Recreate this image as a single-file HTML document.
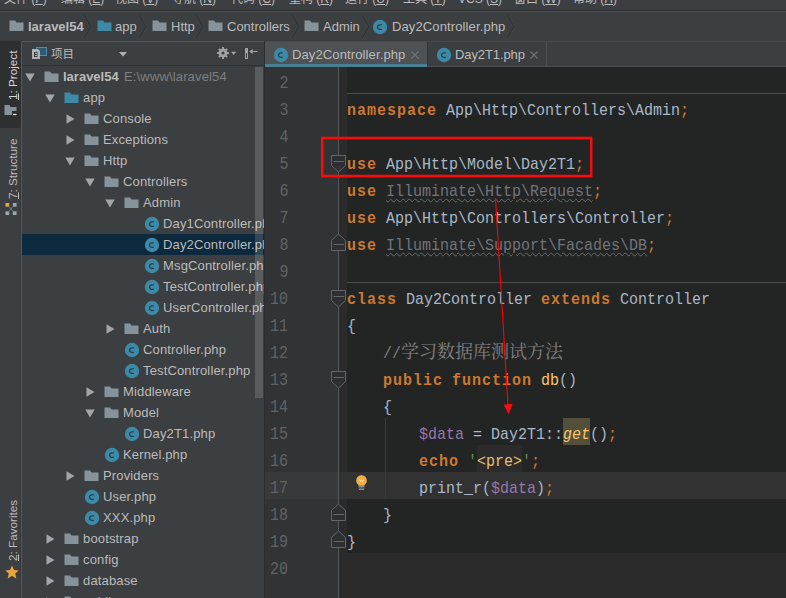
<!DOCTYPE html>
<html lang="zh-CN"><head><meta charset="utf-8"><title>laravel54 - Day2Controller.php</title>
<style>
html,body{margin:0;padding:0}
body{width:786px;height:598px;overflow:hidden;position:relative;background:#3C3F41;
 font-family:"Liberation Sans","Noto Sans CJK SC",sans-serif;font-size:13px;color:#BBBBBB}
div,span,svg{box-sizing:border-box}
.abs,.ic,.t{position:absolute}
.ic{display:block;overflow:visible}
.t{white-space:pre;line-height:16px;height:16px}
.b{font-weight:bold}
#menu{position:absolute;left:0;top:0;width:786px;height:10px;overflow:hidden;background:#3C3F41}
#menu span{position:absolute;top:-8px;font-size:12px;line-height:14px;white-space:pre;color:#BBBBBB}
#menu u{text-decoration:underline;text-underline-offset:1px}
#nav{position:absolute;left:0;top:12px;width:786px;height:29px}
#stripe{position:absolute;left:0;top:42px;width:21px;height:556px;background:#3C3F41}
.vt{position:absolute;left:1.5px;width:21px;white-space:pre;font-size:11.7px;line-height:21px;
 transform-origin:0 0;transform:rotate(-90deg);text-align:left}
#proj{position:absolute;left:22px;top:42px;width:242px;height:556px;overflow:hidden;background:#3C3F41}
#tree{position:absolute;left:0;top:24px;width:242px;height:532px;overflow:hidden}
.row{position:absolute;left:0;width:242px;height:21px}
.row .t{top:3px;letter-spacing:.15px}
.g{color:#7D7F80}
#ed{position:absolute;left:265px;top:42px;width:521px;height:556px;overflow:hidden;background:#2B2B2B}
#tabs{position:absolute;left:0;top:0;width:521px;height:25px;background:#3C3F41}
#gut{position:absolute;left:0;top:25px;width:73px;height:531px;background:#313335}
.ln{position:absolute;left:0;width:23.5px;text-align:right;height:27px;line-height:27px;font-family:"Liberation Mono",monospace;
 font-size:17.5px;color:#606366;white-space:pre}
.ln i{font-style:normal;display:inline-block;transform:scaleX(.857);transform-origin:100% 50%}
#code{position:absolute;left:82px;top:25px;width:439px;height:486px;background:#232525}
.cl{position:absolute;left:0;height:27px;line-height:27px;white-space:pre;font-family:"Liberation Mono","Noto Serif CJK SC",monospace;
 font-size:17px;color:#A9B7C6;transform:scaleX(.88235);transform-origin:0 0;padding-top:3px}
.k{color:#CC7832;font-weight:bold;letter-spacing:1.1333px}
.o{color:#CC7832}
.v{color:#9876AA}
.f{color:#FFC66D}
.c{color:#808080}
.cj{position:absolute;height:27px;line-height:27px;padding-top:3px;white-space:pre;font-family:"Liberation Mono","Noto Serif CJK SC",serif;font-size:18px;color:#808080}
.u{color:#72737A;text-decoration:underline wavy #6A6A6A;text-decoration-thickness:1px;text-underline-offset:1.5px}
.s{color:#6A8759}
.h{color:#E8BF6A}
</style></head><body>

<div id="menu">
<span style="left:4px">文件 (<u>F</u>)</span>
<span style="left:61px">编辑 (<u>E</u>)</span>
<span style="left:115px">视图 (<u>V</u>)</span>
<span style="left:172px">导航 (<u>N</u>)</span>
<span style="left:231px">代码 (<u>C</u>)</span>
<span style="left:289px">重构 (<u>R</u>)</span>
<span style="left:345px">运行 (<u>U</u>)</span>
<span style="left:403px">工具 (<u>T</u>)</span>
<span style="left:458px">VCS (<u>S</u>)</span>
<span style="left:514px">窗口 (<u>W</u>)</span>
<span style="left:573px">帮助 (<u>H</u>)</span>
</div>
<div class="abs" style="left:0;top:10px;width:786px;height:1px;background:#2A2C2D"></div>
<div class="abs" style="left:0;top:11px;width:786px;height:1px;background:#505254"></div>
<div id="nav">
<svg class="ic" style="left:9px;top:8px" width="15" height="12" viewBox="0 0 15 12"><path d="M0.5 0.5H6L7.5 2.5H14.5V11H0.5Z" fill="#87939A"/></svg>
<span class="t b" style="left:28px;top:7px">laravel54</span>
<svg class="ic" style="left:97px;top:8px" width="15" height="12" viewBox="0 0 15 12"><path d="M0.5 0.5H6L7.5 2.5H14.5V11H0.5Z" fill="#3E8AA6"/></svg>
<span class="t" style="left:115px;top:7px">app</span>
<svg class="ic" style="left:152px;top:8px" width="15" height="12" viewBox="0 0 15 12"><path d="M0.5 0.5H6L7.5 2.5H14.5V11H0.5Z" fill="#87939A"/></svg>
<span class="t" style="left:171px;top:7px">Http</span>
<svg class="ic" style="left:208px;top:8px" width="15" height="12" viewBox="0 0 15 12"><path d="M0.5 0.5H6L7.5 2.5H14.5V11H0.5Z" fill="#87939A"/></svg>
<span class="t" style="left:227px;top:7px">Controllers</span>
<svg class="ic" style="left:304px;top:8px" width="15" height="12" viewBox="0 0 15 12"><path d="M0.5 0.5H6L7.5 2.5H14.5V11H0.5Z" fill="#87939A"/></svg>
<span class="t" style="left:323px;top:7px">Admin</span>
<svg class="ic" style="left:372px;top:7px" width="16" height="16" viewBox="0 0 16 16"><circle cx="8" cy="8" r="7.2" fill="#3C8AA7"/><path d="M9.9 5.95H7.8A2.2 2.2 0 0 0 5.55 8.15A2.2 2.2 0 0 0 7.8 10.35H9.9" fill="none" stroke="#27404C" stroke-width="1.3"/></svg>
<span class="t" style="left:392px;top:7px;letter-spacing:.12px">Day2Controller.php</span>
<svg class="ic" style="left:84px;top:2px" width="8" height="25" viewBox="0 0 8 25"><path d="M0.5 1L7 12.5L0.5 24" fill="none" stroke="#2C2E2F" stroke-width="1"/><path d="M1.5 1L8 12.5L1.5 24" fill="none" stroke="#45484A" stroke-width="0.6"/></svg>
<svg class="ic" style="left:139px;top:2px" width="8" height="25" viewBox="0 0 8 25"><path d="M0.5 1L7 12.5L0.5 24" fill="none" stroke="#2C2E2F" stroke-width="1"/><path d="M1.5 1L8 12.5L1.5 24" fill="none" stroke="#45484A" stroke-width="0.6"/></svg>
<svg class="ic" style="left:196px;top:2px" width="8" height="25" viewBox="0 0 8 25"><path d="M0.5 1L7 12.5L0.5 24" fill="none" stroke="#2C2E2F" stroke-width="1"/><path d="M1.5 1L8 12.5L1.5 24" fill="none" stroke="#45484A" stroke-width="0.6"/></svg>
<svg class="ic" style="left:292px;top:2px" width="8" height="25" viewBox="0 0 8 25"><path d="M0.5 1L7 12.5L0.5 24" fill="none" stroke="#2C2E2F" stroke-width="1"/><path d="M1.5 1L8 12.5L1.5 24" fill="none" stroke="#45484A" stroke-width="0.6"/></svg>
<svg class="ic" style="left:362px;top:2px" width="8" height="25" viewBox="0 0 8 25"><path d="M0.5 1L7 12.5L0.5 24" fill="none" stroke="#2C2E2F" stroke-width="1"/><path d="M1.5 1L8 12.5L1.5 24" fill="none" stroke="#45484A" stroke-width="0.6"/></svg>
<svg class="ic" style="left:507px;top:2px" width="8" height="25" viewBox="0 0 8 25"><path d="M0.5 1L7 12.5L0.5 24" fill="none" stroke="#2C2E2F" stroke-width="1"/><path d="M1.5 1L8 12.5L1.5 24" fill="none" stroke="#45484A" stroke-width="0.6"/></svg>
</div>
<div class="abs" style="left:0;top:40px;width:786px;height:1px;background:#393C3E"></div>
<div class="abs" style="left:0;top:41px;width:21px;height:1px;background:#2D2F30"></div>
<div class="abs" style="left:21px;top:41px;width:243px;height:1px;background:#555759"></div>
<div class="abs" style="left:265px;top:41px;width:521px;height:1px;background:#484B4D"></div>
<div id="stripe">
<div class="abs" style="left:0;top:0;width:21px;height:86px;background:#2D2F30"></div>
<div class="vt" style="top:58px;color:#D4D4D4"><u>1</u>: Project</div>
<div class="vt" style="top:157px"><u>7</u>: Structure</div>
<div class="vt" style="top:519px"><u>2</u>: Favorites</div>
<svg class="ic" style="left:4px;top:63px" width="14" height="12" viewBox="0 0 14 12"><path d="M0.5 0H5.5L6.5 2H12.5V10H0.5Z" fill="#87939A"/><rect x="8" y="6" width="5.5" height="6" fill="#2D2F30"/><path d="M9 9.5H12.5" stroke="#EDEDED" stroke-width="1.2"/></svg>
<svg class="ic" style="left:5px;top:161px" width="12" height="12" viewBox="0 0 12 13"><rect x="0" y="0" width="4" height="4" fill="#E8A33D"/><rect x="8" y="0" width="4" height="4" fill="#9AA7B0"/><rect x="0" y="9" width="4" height="4" fill="#9AA7B0"/><rect x="8" y="9" width="4" height="4" fill="#9AA7B0"/><path d="M3.5 3.5L8.5 9.5M8.5 3.5L3.5 9.5" stroke="#7A858C" stroke-width="0.9"/></svg>
<svg class="ic" style="left:5px;top:523px" width="14" height="14" viewBox="0 0 14 14"><path d="M7 0.5L9 5L13.8 5.4L10.2 8.6L11.3 13.4L7 10.8L2.7 13.4L3.8 8.6L0.2 5.4L5 5Z" fill="#E9A53C"/></svg>
</div>
<div class="abs" style="left:20px;top:127px;width:1px;height:471px;background:#37393B"></div>
<div class="abs" style="left:21px;top:41px;width:1px;height:557px;background:#555759"></div>
<div id="proj">
<svg class="ic" style="left:10px;top:5px" width="16" height="13" viewBox="0 0 16 13"><rect x="4.5" y="0.5" width="10" height="8" fill="#2F5A70" stroke="#4A8FB0"/><path d="M0 2H6L8 4V12H0Z" fill="#AFB1B3"/><path d="M2 5.5H5.5M2 7.5H5.5M2 9.5H5.5M2.5 5V10M5.5 6.5V7M5.5 8.5V9" stroke="#3C3F41" stroke-width="1"/></svg>
<span class="t" style="left:29px;top:4px;font-size:11.5px">项目</span>
<svg class="ic" style="left:97px;top:9.6px" width="8" height="5" viewBox="0 0 8 5"><path d="M0 0H8L4 4.5Z" fill="#AFB1B3"/></svg>
<svg class="ic" style="left:195px;top:5px" width="20" height="12" viewBox="0 0 20 12"><circle cx="6" cy="6" r="3.2" fill="none" stroke="#A0A2A3" stroke-width="2.4"/><path d="M6 0V12M0 6H12M1.8 1.8L10.2 10.2M10.2 1.8L1.8 10.2" stroke="#A0A2A3" stroke-width="1.9"/><circle cx="6" cy="6" r="1.5" fill="#3C3F41"/><path d="M14 4.8H19.2L16.6 8Z" fill="#A0A2A3"/></svg>
<svg class="ic" style="left:223px;top:6px" width="13" height="11" viewBox="0 0 13 11"><rect x="0" y="0" width="3" height="11" fill="#A0A2A3"/><rect x="1" y="5" width="1" height="5" fill="#3C3F41"/><path d="M5 3.5H12.5" stroke="#A0A2A3" stroke-width="1.1"/><path d="M4.2 3.5L7.6 1V6Z" fill="#A0A2A3"/></svg>
<div class="abs" style="left:0;top:23px;width:242px;height:1px;background:#2E3031"></div>
<div id="tree">
<div class="row" style="top:0px">
<svg class="ic" style="left:3px;top:7px" width="10" height="9" viewBox="0 0 10 9"><path d="M0.3 0.5H9.7L5 8.5Z" fill="#A3A5A6"/></svg>
<svg class="ic" style="left:22px;top:5px" width="15" height="12" viewBox="0 0 15 12"><path d="M0.5 0.5H6L7.5 2.5H14.5V11H0.5Z" fill="#87939A"/></svg>
<span class="t b" style="left:41px;letter-spacing:0">laravel54</span><span class="t g" style="left:102px">E:\www\laravel54</span>
</div>
<div class="row" style="top:21px">
<svg class="ic" style="left:23px;top:7px" width="10" height="9" viewBox="0 0 10 9"><path d="M0.3 0.5H9.7L5 8.5Z" fill="#A3A5A6"/></svg>
<svg class="ic" style="left:42px;top:5px" width="15" height="12" viewBox="0 0 15 12"><path d="M0.5 0.5H6L7.5 2.5H14.5V11H0.5Z" fill="#3E8AA6"/></svg>
<span class="t" style="left:61px">app</span>
</div>
<div class="row" style="top:42px">
<svg class="ic" style="left:44px;top:6px" width="9" height="10" viewBox="0 0 9 10"><path d="M0.5 0.3V9.7L8.5 5Z" fill="#A3A5A6"/></svg>
<svg class="ic" style="left:62px;top:5px" width="15" height="12" viewBox="0 0 15 12"><path d="M0.5 0.5H6L7.5 2.5H14.5V11H0.5Z" fill="#87939A"/></svg>
<span class="t" style="left:81px">Console</span>
</div>
<div class="row" style="top:63px">
<svg class="ic" style="left:44px;top:6px" width="9" height="10" viewBox="0 0 9 10"><path d="M0.5 0.3V9.7L8.5 5Z" fill="#A3A5A6"/></svg>
<svg class="ic" style="left:62px;top:5px" width="15" height="12" viewBox="0 0 15 12"><path d="M0.5 0.5H6L7.5 2.5H14.5V11H0.5Z" fill="#87939A"/></svg>
<span class="t" style="left:81px">Exceptions</span>
</div>
<div class="row" style="top:84px">
<svg class="ic" style="left:43px;top:7px" width="10" height="9" viewBox="0 0 10 9"><path d="M0.3 0.5H9.7L5 8.5Z" fill="#A3A5A6"/></svg>
<svg class="ic" style="left:62px;top:5px" width="15" height="12" viewBox="0 0 15 12"><path d="M0.5 0.5H6L7.5 2.5H14.5V11H0.5Z" fill="#87939A"/></svg>
<span class="t" style="left:81px">Http</span>
</div>
<div class="row" style="top:105px">
<svg class="ic" style="left:63px;top:7px" width="10" height="9" viewBox="0 0 10 9"><path d="M0.3 0.5H9.7L5 8.5Z" fill="#A3A5A6"/></svg>
<svg class="ic" style="left:82px;top:5px" width="15" height="12" viewBox="0 0 15 12"><path d="M0.5 0.5H6L7.5 2.5H14.5V11H0.5Z" fill="#87939A"/></svg>
<span class="t" style="left:101px">Controllers</span>
</div>
<div class="row" style="top:126px">
<svg class="ic" style="left:83px;top:7px" width="10" height="9" viewBox="0 0 10 9"><path d="M0.3 0.5H9.7L5 8.5Z" fill="#A3A5A6"/></svg>
<svg class="ic" style="left:102px;top:5px" width="15" height="12" viewBox="0 0 15 12"><path d="M0.5 0.5H6L7.5 2.5H14.5V11H0.5Z" fill="#87939A"/></svg>
<span class="t" style="left:121px">Admin</span>
</div>
<div class="row" style="top:147px">
<svg class="ic" style="left:122px;top:3px" width="16" height="16" viewBox="0 0 16 16"><circle cx="8" cy="8" r="7.2" fill="#3C8AA7"/><path d="M9.9 5.95H7.8A2.2 2.2 0 0 0 5.55 8.15A2.2 2.2 0 0 0 7.8 10.35H9.9" fill="none" stroke="#27404C" stroke-width="1.3"/></svg>
<span class="t" style="left:141px">Day1Controller.php</span>
</div>
<div class="row" style="top:168px;background:#0D293E">
<svg class="ic" style="left:122px;top:3px" width="16" height="16" viewBox="0 0 16 16"><circle cx="8" cy="8" r="7.2" fill="#3C8AA7"/><path d="M9.9 5.95H7.8A2.2 2.2 0 0 0 5.55 8.15A2.2 2.2 0 0 0 7.8 10.35H9.9" fill="none" stroke="#27404C" stroke-width="1.3"/></svg>
<span class="t" style="left:141px">Day2Controller.php</span>
</div>
<div class="row" style="top:189px">
<svg class="ic" style="left:122px;top:3px" width="16" height="16" viewBox="0 0 16 16"><circle cx="8" cy="8" r="7.2" fill="#3C8AA7"/><path d="M9.9 5.95H7.8A2.2 2.2 0 0 0 5.55 8.15A2.2 2.2 0 0 0 7.8 10.35H9.9" fill="none" stroke="#27404C" stroke-width="1.3"/></svg>
<span class="t" style="left:141px">MsgController.php</span>
</div>
<div class="row" style="top:210px">
<svg class="ic" style="left:122px;top:3px" width="16" height="16" viewBox="0 0 16 16"><circle cx="8" cy="8" r="7.2" fill="#3C8AA7"/><path d="M9.9 5.95H7.8A2.2 2.2 0 0 0 5.55 8.15A2.2 2.2 0 0 0 7.8 10.35H9.9" fill="none" stroke="#27404C" stroke-width="1.3"/></svg>
<span class="t" style="left:141px">TestController.php</span>
</div>
<div class="row" style="top:231px">
<svg class="ic" style="left:122px;top:3px" width="16" height="16" viewBox="0 0 16 16"><circle cx="8" cy="8" r="7.2" fill="#3C8AA7"/><path d="M9.9 5.95H7.8A2.2 2.2 0 0 0 5.55 8.15A2.2 2.2 0 0 0 7.8 10.35H9.9" fill="none" stroke="#27404C" stroke-width="1.3"/></svg>
<span class="t" style="left:141px">UserController.php</span>
</div>
<div class="row" style="top:252px">
<svg class="ic" style="left:84px;top:6px" width="9" height="10" viewBox="0 0 9 10"><path d="M0.5 0.3V9.7L8.5 5Z" fill="#A3A5A6"/></svg>
<svg class="ic" style="left:102px;top:5px" width="15" height="12" viewBox="0 0 15 12"><path d="M0.5 0.5H6L7.5 2.5H14.5V11H0.5Z" fill="#87939A"/></svg>
<span class="t" style="left:121px">Auth</span>
</div>
<div class="row" style="top:273px">
<svg class="ic" style="left:102px;top:3px" width="16" height="16" viewBox="0 0 16 16"><circle cx="8" cy="8" r="7.2" fill="#3C8AA7"/><path d="M9.9 5.95H7.8A2.2 2.2 0 0 0 5.55 8.15A2.2 2.2 0 0 0 7.8 10.35H9.9" fill="none" stroke="#27404C" stroke-width="1.3"/></svg>
<span class="t" style="left:121px">Controller.php</span>
</div>
<div class="row" style="top:294px">
<svg class="ic" style="left:102px;top:3px" width="16" height="16" viewBox="0 0 16 16"><circle cx="8" cy="8" r="7.2" fill="#3C8AA7"/><path d="M9.9 5.95H7.8A2.2 2.2 0 0 0 5.55 8.15A2.2 2.2 0 0 0 7.8 10.35H9.9" fill="none" stroke="#27404C" stroke-width="1.3"/></svg>
<span class="t" style="left:121px">TestController.php</span>
</div>
<div class="row" style="top:315px">
<svg class="ic" style="left:64px;top:6px" width="9" height="10" viewBox="0 0 9 10"><path d="M0.5 0.3V9.7L8.5 5Z" fill="#A3A5A6"/></svg>
<svg class="ic" style="left:82px;top:5px" width="15" height="12" viewBox="0 0 15 12"><path d="M0.5 0.5H6L7.5 2.5H14.5V11H0.5Z" fill="#87939A"/></svg>
<span class="t" style="left:101px">Middleware</span>
</div>
<div class="row" style="top:336px">
<svg class="ic" style="left:63px;top:7px" width="10" height="9" viewBox="0 0 10 9"><path d="M0.3 0.5H9.7L5 8.5Z" fill="#A3A5A6"/></svg>
<svg class="ic" style="left:82px;top:5px" width="15" height="12" viewBox="0 0 15 12"><path d="M0.5 0.5H6L7.5 2.5H14.5V11H0.5Z" fill="#87939A"/></svg>
<span class="t" style="left:101px">Model</span>
</div>
<div class="row" style="top:357px">
<svg class="ic" style="left:102px;top:3px" width="16" height="16" viewBox="0 0 16 16"><circle cx="8" cy="8" r="7.2" fill="#3C8AA7"/><path d="M9.9 5.95H7.8A2.2 2.2 0 0 0 5.55 8.15A2.2 2.2 0 0 0 7.8 10.35H9.9" fill="none" stroke="#27404C" stroke-width="1.3"/></svg>
<span class="t" style="left:121px">Day2T1.php</span>
</div>
<div class="row" style="top:378px">
<svg class="ic" style="left:82px;top:3px" width="16" height="16" viewBox="0 0 16 16"><circle cx="8" cy="8" r="7.2" fill="#3C8AA7"/><path d="M9.9 5.95H7.8A2.2 2.2 0 0 0 5.55 8.15A2.2 2.2 0 0 0 7.8 10.35H9.9" fill="none" stroke="#27404C" stroke-width="1.3"/></svg>
<span class="t" style="left:101px">Kernel.php</span>
</div>
<div class="row" style="top:399px">
<svg class="ic" style="left:44px;top:6px" width="9" height="10" viewBox="0 0 9 10"><path d="M0.5 0.3V9.7L8.5 5Z" fill="#A3A5A6"/></svg>
<svg class="ic" style="left:62px;top:5px" width="15" height="12" viewBox="0 0 15 12"><path d="M0.5 0.5H6L7.5 2.5H14.5V11H0.5Z" fill="#87939A"/></svg>
<span class="t" style="left:81px">Providers</span>
</div>
<div class="row" style="top:420px">
<svg class="ic" style="left:62px;top:3px" width="16" height="16" viewBox="0 0 16 16"><circle cx="8" cy="8" r="7.2" fill="#3C8AA7"/><path d="M9.9 5.95H7.8A2.2 2.2 0 0 0 5.55 8.15A2.2 2.2 0 0 0 7.8 10.35H9.9" fill="none" stroke="#27404C" stroke-width="1.3"/></svg>
<span class="t" style="left:81px">User.php</span>
</div>
<div class="row" style="top:441px">
<svg class="ic" style="left:62px;top:3px" width="16" height="16" viewBox="0 0 16 16"><circle cx="8" cy="8" r="7.2" fill="#3C8AA7"/><path d="M9.9 5.95H7.8A2.2 2.2 0 0 0 5.55 8.15A2.2 2.2 0 0 0 7.8 10.35H9.9" fill="none" stroke="#27404C" stroke-width="1.3"/></svg>
<span class="t" style="left:81px">XXX.php</span>
</div>
<div class="row" style="top:462px">
<svg class="ic" style="left:24px;top:6px" width="9" height="10" viewBox="0 0 9 10"><path d="M0.5 0.3V9.7L8.5 5Z" fill="#A3A5A6"/></svg>
<svg class="ic" style="left:42px;top:5px" width="15" height="12" viewBox="0 0 15 12"><path d="M0.5 0.5H6L7.5 2.5H14.5V11H0.5Z" fill="#87939A"/></svg>
<span class="t" style="left:61px">bootstrap</span>
</div>
<div class="row" style="top:483px">
<svg class="ic" style="left:24px;top:6px" width="9" height="10" viewBox="0 0 9 10"><path d="M0.5 0.3V9.7L8.5 5Z" fill="#A3A5A6"/></svg>
<svg class="ic" style="left:42px;top:5px" width="15" height="12" viewBox="0 0 15 12"><path d="M0.5 0.5H6L7.5 2.5H14.5V11H0.5Z" fill="#87939A"/></svg>
<span class="t" style="left:61px">config</span>
</div>
<div class="row" style="top:504px">
<svg class="ic" style="left:24px;top:6px" width="9" height="10" viewBox="0 0 9 10"><path d="M0.5 0.3V9.7L8.5 5Z" fill="#A3A5A6"/></svg>
<svg class="ic" style="left:42px;top:5px" width="15" height="12" viewBox="0 0 15 12"><path d="M0.5 0.5H6L7.5 2.5H14.5V11H0.5Z" fill="#87939A"/></svg>
<span class="t" style="left:61px">database</span>
</div>
<div class="row" style="top:525px">
<svg class="ic" style="left:24px;top:6px" width="9" height="10" viewBox="0 0 9 10"><path d="M0.5 0.3V9.7L8.5 5Z" fill="#A3A5A6"/></svg>
<svg class="ic" style="left:42px;top:5px" width="15" height="12" viewBox="0 0 15 12"><path d="M0.5 0.5H6L7.5 2.5H14.5V11H0.5Z" fill="#87939A"/></svg>
<span class="t" style="left:61px">public</span>
</div>
</div>
<div class="abs" style="left:233px;top:25px;width:8px;height:331px;background:rgba(255,255,255,.15)"></div>
</div>
<div class="abs" style="left:264px;top:41px;width:1px;height:557px;background:#2B2D2E"></div>
<div id="ed">
<div id="tabs">
<div class="abs" style="left:0;top:0;width:162px;height:25px;background:#4E5254"></div>
<div class="abs" style="left:0;top:22px;width:162px;height:3px;background:#4A7F94"></div>
<svg class="ic" style="left:8px;top:5px" width="16" height="16" viewBox="0 0 16 16"><circle cx="8" cy="8" r="7.2" fill="#3C8AA7"/><path d="M9.9 5.95H7.8A2.2 2.2 0 0 0 5.55 8.15A2.2 2.2 0 0 0 7.8 10.35H9.9" fill="none" stroke="#27404C" stroke-width="1.3"/></svg>
<span class="t" style="left:27px;top:5px;letter-spacing:.12px">Day2Controller.php</span>
<svg class="ic" style="left:146px;top:9px" width="8" height="8" viewBox="0 0 8 8"><path d="M0.5 0.5L7.5 7.5M7.5 0.5L0.5 7.5" stroke="#717375" stroke-width="1.1"/></svg>
<div class="abs" style="left:162px;top:0;width:1px;height:24px;background:#323232"></div>
<svg class="ic" style="left:171px;top:5px" width="16" height="16" viewBox="0 0 16 16"><circle cx="8" cy="8" r="7.2" fill="#3C8AA7"/><path d="M9.9 5.95H7.8A2.2 2.2 0 0 0 5.55 8.15A2.2 2.2 0 0 0 7.8 10.35H9.9" fill="none" stroke="#27404C" stroke-width="1.3"/></svg>
<span class="t" style="left:190px;top:5px;letter-spacing:-.1px">Day2T1.php</span>
<svg class="ic" style="left:265px;top:9px" width="8" height="8" viewBox="0 0 8 8"><path d="M0.5 0.5L7.5 7.5M7.5 0.5L0.5 7.5" stroke="#717375" stroke-width="1.1"/></svg>
<div class="abs" style="left:281px;top:0;width:1px;height:24px;background:#4D4F51"></div>
<div class="abs" style="left:0;top:24px;width:521px;height:1px;background:#4D4F51"></div>
<div class="abs" style="left:0;top:22px;width:162px;height:3px;background:#4A7F94"></div>
</div>
<div id="gut">
<div class="abs" style="left:0;top:405px;width:73px;height:27px;background:#37393B"></div>
<div class="ln" style="top:3px"><i>2</i></div>
<div class="ln" style="top:30px"><i>3</i></div>
<div class="ln" style="top:57px"><i>4</i></div>
<div class="ln" style="top:84px"><i>5</i></div>
<div class="ln" style="top:111px"><i>6</i></div>
<div class="ln" style="top:138px"><i>7</i></div>
<div class="ln" style="top:165px"><i>8</i></div>
<div class="ln" style="top:192px"><i>9</i></div>
<div class="ln" style="top:219px"><i>10</i></div>
<div class="ln" style="top:246px"><i>11</i></div>
<div class="ln" style="top:273px"><i>12</i></div>
<div class="ln" style="top:300px"><i>13</i></div>
<div class="ln" style="top:327px"><i>14</i></div>
<div class="ln" style="top:354px"><i>15</i></div>
<div class="ln" style="top:381px"><i>16</i></div>
<div class="ln" style="top:408px"><i>17</i></div>
<div class="ln" style="top:435px"><i>18</i></div>
<div class="ln" style="top:462px"><i>19</i></div>
<div class="ln" style="top:489px"><i>20</i></div>
</div>
<div class="abs" style="left:73px;top:25px;width:1px;height:531px;background:#555758"></div>
<div class="abs" style="left:74px;top:25px;width:8px;height:531px;background:#2B2B2B"></div>
<div class="abs" style="left:74px;top:430px;width:8px;height:27px;background:#323232"></div>
<div id="code">
<div class="abs" style="left:0;top:405px;width:439px;height:27px;background:#323232"></div>
<div class="abs" style="left:0;top:26px;width:439px;height:1px;background:#4D4D4D"></div>
<div class="abs" style="left:0;top:215px;width:439px;height:1px;background:#4D4D4D"></div>
<div class="abs" style="left:216px;top:351px;width:27px;height:27px;background:#52503A"></div>
<div class="abs" style="left:130px;top:378px;width:45px;height:27px;background:#2B2B2B"></div>
<div class="abs" style="left:38px;top:351px;width:1px;height:81px;background:#393B3B"></div>
<div class="cl" style="top:27px"><span class="k">namespace</span> App\Http\Controllers\Admin<span class="o">;</span></div>
<div class="cl" style="top:81px"><span class="k">use</span> App\Http\Model\Day2T1<span class="o">;</span></div>
<div class="cl" style="top:108px"><span class="k">use</span> <span class="u">Illuminate\Http\Request</span><span class="o">;</span></div>
<div class="cl" style="top:135px"><span class="k">use</span> App\Http\Controllers\Controller<span class="o">;</span></div>
<div class="cl" style="top:162px"><span class="k">use</span> <span class="u">Illuminate\Support\Facades\DB</span><span class="o">;</span></div>
<div class="cl" style="top:216px"><span class="k">class</span> Day2Controller <span class="k">extends</span> Controller</div>
<div class="cl" style="top:243px">{</div>
<div class="cl" style="top:270px">    <span class="c">//</span></div>
<div class="cl" style="top:297px">    <span class="k">public</span> <span class="k">function</span> <span class="f">db</span>()</div>
<div class="cl" style="top:324px">    {</div>
<div class="cl" style="top:351px">        <span class="v">$data</span> = Day2T1::<i class="f">get</i>()<span class="o">;</span></div>
<div class="cl" style="top:378px">        <span class="k">echo</span> <span class="s">'</span><span class="h">&lt;pre&gt;</span><span class="s">'</span><span class="o">;</span></div>
<div class="cl" style="top:405px">        print_r(<span class="v">$data</span>)<span class="o">;</span></div>
<div class="cl" style="top:432px">    }</div>
<div class="cl" style="top:459px">}</div>
<div class="cj" style="left:54px;top:270px">学习数据库测试方法</div>
</div>
<svg class="ic" style="left:90.5px;top:432.5px" width="11" height="16" viewBox="0 0 11 16"><path d="M5.5 0.2A5.3 5.3 0 0 0 2.3 9.7L2.5 10.8H8.5L8.7 9.7A5.3 5.3 0 0 0 5.5 0.2Z" fill="#F3AE45"/><path d="M3.6 4.6L4.6 6.6L5.5 4.9L6.4 6.6L7.4 4.6" fill="none" stroke="#FDE7B5" stroke-width="0.8"/><path d="M2.6 11.5H8.4M2.6 13H8.4M2.9 14.5H8.1" stroke="#8E9092" stroke-width="1.1"/></svg>
<svg class="ic" style="left:66px;top:113px" width="16" height="18" viewBox="0 0 16 18"><path d="M0.5 0.5H14.5V10.5L7.5 17L0.5 10.5Z" fill="#2D2F30" stroke="#636669" stroke-width="1"/><path d="M2.5 6.5H13" stroke="#636669" stroke-width="1"/></svg>
<svg class="ic" style="left:66px;top:191px" width="16" height="18" viewBox="0 0 16 18"><path d="M0.5 17.5H14.5V7.5L7.5 1L0.5 7.5Z" fill="#2D2F30" stroke="#636669" stroke-width="1"/><path d="M2.5 11.5H13" stroke="#636669" stroke-width="1"/></svg>
<svg class="ic" style="left:66px;top:248px" width="16" height="18" viewBox="0 0 16 18"><path d="M0.5 0.5H14.5V10.5L7.5 17L0.5 10.5Z" fill="#2D2F30" stroke="#636669" stroke-width="1"/><path d="M2.5 6.5H13" stroke="#636669" stroke-width="1"/></svg>
<svg class="ic" style="left:66px;top:329px" width="16" height="18" viewBox="0 0 16 18"><path d="M0.5 0.5H14.5V10.5L7.5 17L0.5 10.5Z" fill="#2D2F30" stroke="#636669" stroke-width="1"/><path d="M2.5 6.5H13" stroke="#636669" stroke-width="1"/></svg>
<svg class="ic" style="left:66px;top:461px" width="16" height="18" viewBox="0 0 16 18"><path d="M0.5 17.5H14.5V7.5L7.5 1L0.5 7.5Z" fill="#2D2F30" stroke="#636669" stroke-width="1"/><path d="M2.5 11.5H13" stroke="#636669" stroke-width="1"/></svg>
<svg class="ic" style="left:66px;top:488px" width="16" height="18" viewBox="0 0 16 18"><path d="M0.5 17.5H14.5V7.5L7.5 1L0.5 7.5Z" fill="#2D2F30" stroke="#636669" stroke-width="1"/><path d="M2.5 11.5H13" stroke="#636669" stroke-width="1"/></svg>
</div>
<svg class="ic" style="left:0;top:0" width="786" height="598" viewBox="0 0 786 598"><rect x="322.2" y="138" width="269" height="38" fill="none" stroke="#FF0A0A" stroke-width="2.5"/><path d="M495.5 198L508 405" stroke="#FF0000" stroke-width="1.1" fill="none"/><path d="M503.6 404.5L512.6 404L508.6 414.2Z" fill="#FF0A0A"/></svg>
</body></html>
